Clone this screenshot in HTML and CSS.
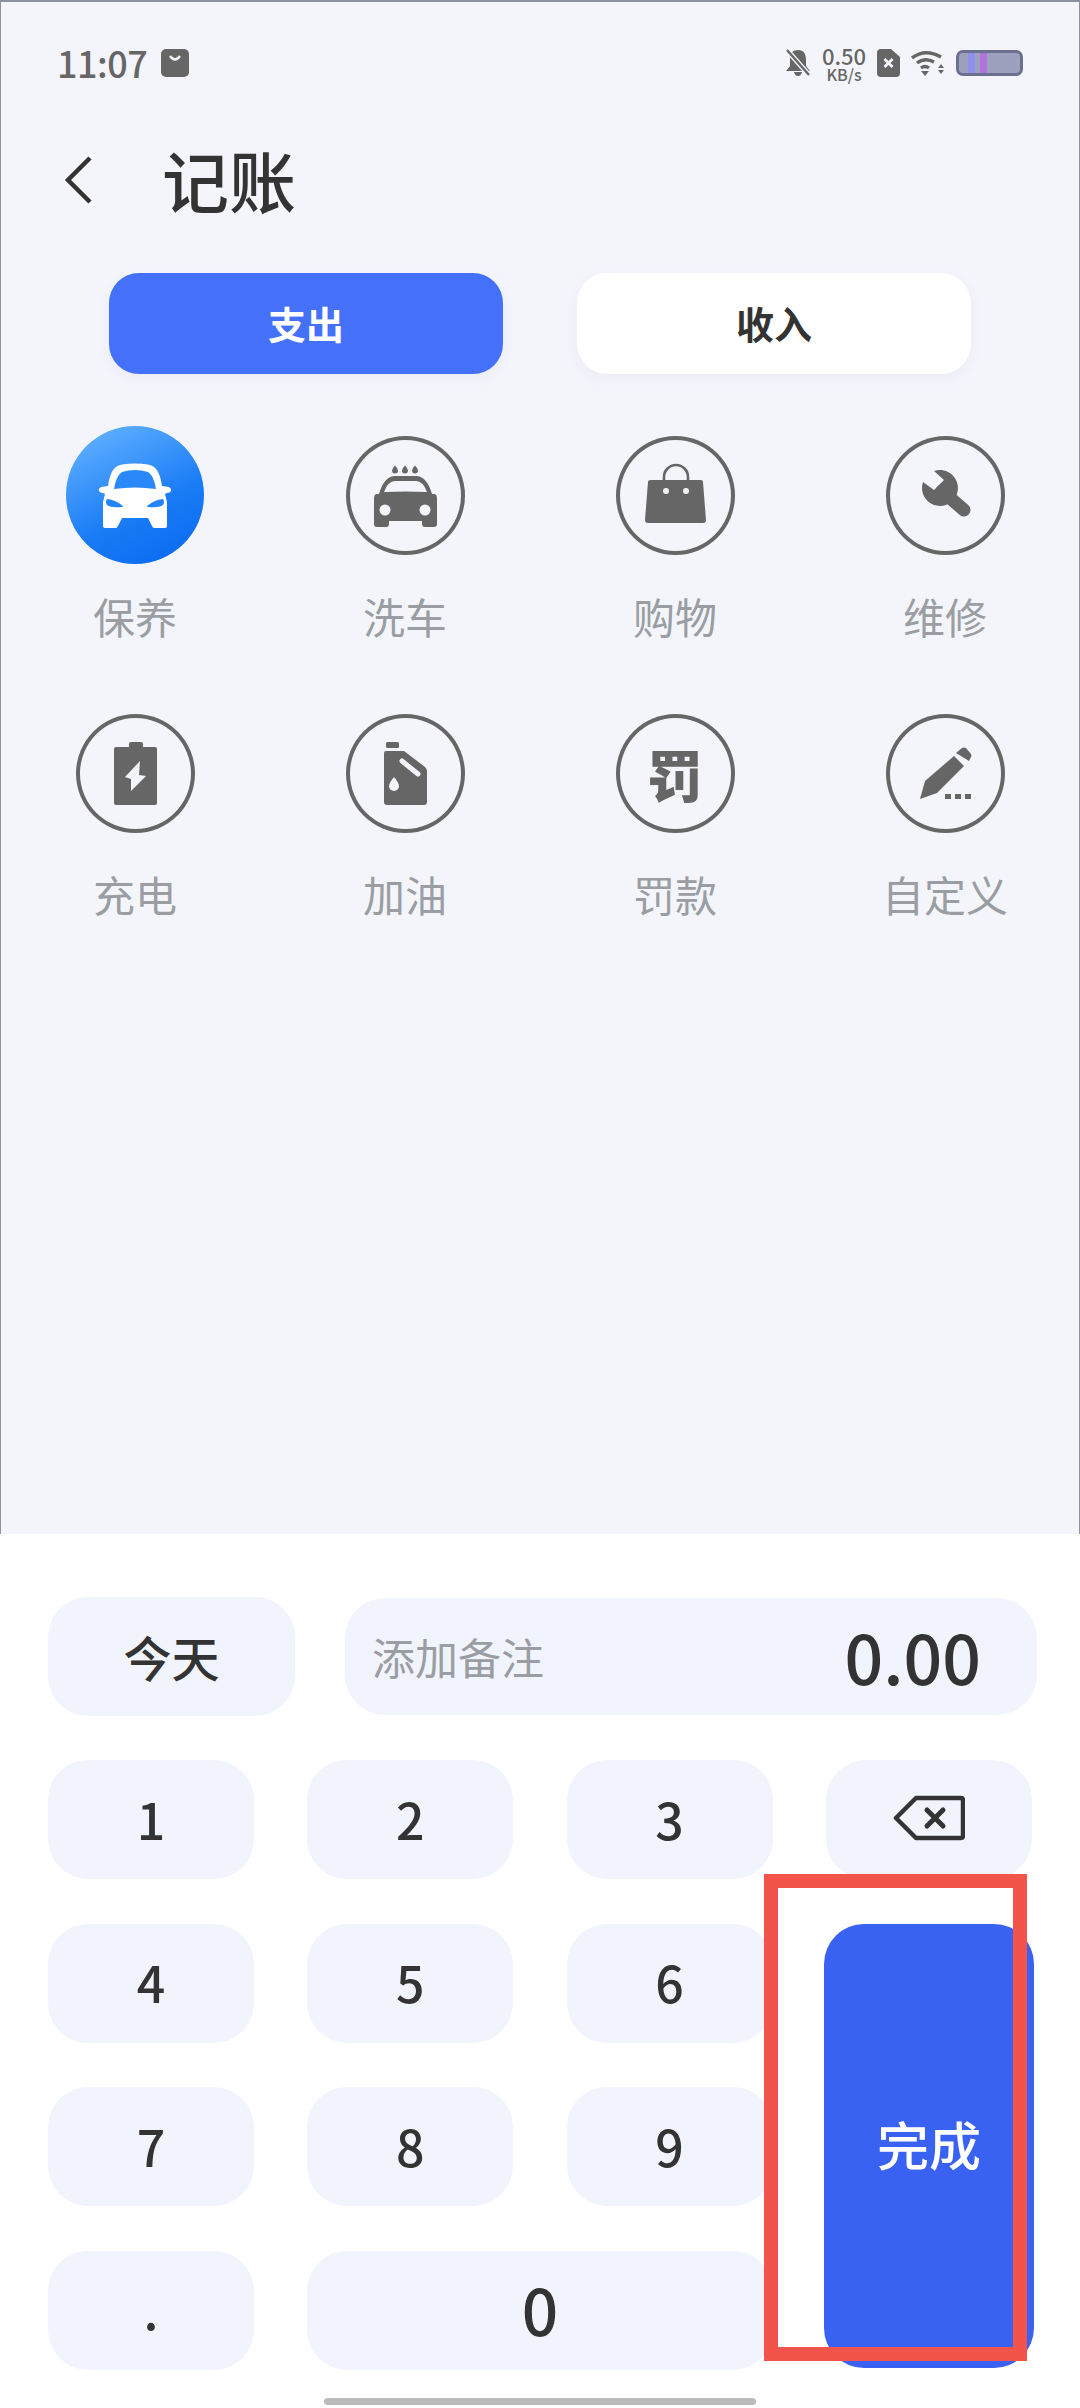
FILE: index.html
```html
<!DOCTYPE html>
<html lang="zh-CN">
<head>
  <meta charset="UTF-8" />
  <meta name="viewport" content="width=device-width, initial-scale=1.0"/>
  <title>记账</title>
  <link rel="stylesheet" href="styles.css">
</head>
<body>

<div class="screen">
  <div class="top">
    <div class="statusbar">
      <div class="status-left">
        <span class="time">11:07</span>
        <svg class="st-bag" width="28" height="28" viewBox="0 0 28 28">
          <rect width="28" height="28" rx="5" fill="#666"/>
          <path d="M9 7q5 7 10 0" fill="none" stroke="#f4f5fb" stroke-width="2.4"/>
        </svg>
      </div>
      <div class="status-right">
        <svg width="26" height="28" viewBox="0 0 26 28">
          <path d="M13 1c6 0 8 4 8 10v6l4 5H1l4-5v-6C5 5 7 1 13 1zM9 23h8q-1 4-4 4t-4-4z" fill="#666"/>
          <path d="M2 1l22 25" stroke="#f4f5fb" stroke-width="5"/>
          <path d="M2 1l22 25" stroke="#666" stroke-width="2.4"/>
        </svg>
        <div class="speed"><span class="speed-num">0.50</span><span class="speed-unit">KB/s</span></div>
        <svg width="23" height="28" viewBox="0 0 23 28">
          <path d="M4 0h10l9 8v16a4 4 0 0 1-4 4H4a4 4 0 0 1-4-4V4a4 4 0 0 1 4-4z" fill="#666"/>
          <path d="M7.5 10l8 8M15.500 10l-8 8" stroke="#f4f5fb" stroke-width="2.8"/>
        </svg>
        <svg width="34" height="26" viewBox="0 0 34 26">
          <g fill="none" stroke="#666" stroke-width="3.4">
            <path d="M1 8q13-10 29-1"/>
            <path d="M6 13q8-6 17-1"/>
            <path d="M10 18q4-3 8 0"/>
          </g>
          <path d="M10 21h8l-4 5z" fill="#666"/>
          <path d="M30 14l3 4h-6zM27 20h6l-3 4z" fill="#666"/>
        </svg>
        <div class="battery"><span class="batt-a"></span><span class="batt-b"></span></div>
      </div>
    </div>

    <div class="header">
      <svg class="back" width="28" height="50" viewBox="0 0 28 50">
        <path d="M26 3L4 25l22 22" fill="none" stroke="#333" stroke-width="4.500"/>
      </svg>
      <h1 class="title">记账</h1>
    </div>

    <div class="tabs">
      <div class="tab active">支出</div>
      <div class="tab">收入</div>
    </div>

    <div class="cats">
      <div class="cat">
        <div class="cat-icon">
          <svg class="car-on" width="138" height="138" viewBox="0 0 138 138">
            <defs>
              <linearGradient id="blue" x1="0.25" y1="0" x2="0.75" y2="1">
                <stop offset="0" stop-color="#5fb0ff"/>
                <stop offset="0.6" stop-color="#1b7cf6"/>
                <stop offset="1" stop-color="#0b6cf2"/>
              </linearGradient>
            </defs>
            <circle cx="69" cy="69" r="69" fill="url(#blue)"/>
            <path d="M42 60C44 46 48 40 56 38.500q13-2 26 0C90 40 94 46 96 60l7 1q3 2 2 4t-4 2l-2 1 2 8v24q0 2-2 2H88q-1 0-2-2l-4-8H56l-4 8q-1 2-2 2H39q-2 0-2-2V76l2-8-2-1q-3 0-4-2t2-4z" fill="#fff"/>
            <path d="M48 63q2-13 8-17 13-4 26 0 6 4 8 17-21-3-42 0z" fill="#2a88f8"/>
            <path d="M41 73q9 1 16 7 0 1-1 1-11 1-15-2-2-3 0-6zM97 73q-9 1-16 7 0 1 1 1 11 1 15-2 2-3 0-6z" fill="#2484f8"/>
          </svg>
        </div>
        <div class="cat-name">保养</div>
      </div>
      <div class="cat">
        <div class="cat-icon">
          <div class="ring">
            <svg width="119" height="119" viewBox="0 0 119 119">
              <path d="M49 29.500q3 3 3 5a3 3 0 0 1-6 0q0-2 3-5zM59 29.500q3 3 3 5a3 3 0 0 1-6 0q0-2 3-5zM69 29.500q3 3 3 5a3 3 0 0 1-6 0q0-2 3-5z" fill="#666"/>
              <path d="M33 58q5-17 15-18h23q10 1 15 18l3 0q2 1 2 4v26q0 3-3 3H79q-3 0-3-3v-3H43v3q0 3-3 3H31q-3 0-3-3V62q0-3 2-4z" fill="#666"/>
              <path d="M38 56q4-11 11-11h21q7 0 11 11q-21-1-43 0z" fill="#f4f5fb"/>
              <circle cx="39" cy="74" r="5.500" fill="#f4f5fb"/>
              <circle cx="79" cy="74" r="5.500" fill="#f4f5fb"/>
            </svg>
          </div>
        </div>
        <div class="cat-name">洗车</div>
      </div>
      <div class="cat">
        <div class="cat-icon">
          <div class="ring">
            <svg width="119" height="119" viewBox="0 0 119 119">
              <path d="M48 45V41a12 12 0 0 1 24 0v4" fill="none" stroke="#666" stroke-width="2.600"/>
              <path d="M35 44h50q2 0 2 2l3 38q0 3-3 3H32q-3 0-3-3l3-38q0-2 3-2z" fill="#666"/>
              <circle cx="50" cy="55" r="3" fill="#f4f5fb"/>
              <circle cx="70" cy="55" r="3" fill="#f4f5fb"/>
            </svg>
          </div>
        </div>
        <div class="cat-name">购物</div>
      </div>
      <div class="cat">
        <div class="cat-icon">
          <div class="ring">
            <svg width="119" height="119" viewBox="0 0 119 119">
              <path d="M48 35L58 44 48 54 37 46A18 18 0 1 0 48 35z" fill="#666"/>
              <path d="M56 55L78 74" stroke="#666" stroke-width="13" stroke-linecap="round"/>
            </svg>
          </div>
        </div>
        <div class="cat-name">维修</div>
      </div>
      <div class="cat">
        <div class="cat-icon">
          <div class="ring">
            <svg width="119" height="119" viewBox="0 0 119 119">
              <path d="M53 30q0-2 2-2h10q2 0 2 2v3H53z" fill="#666"/>
              <rect x="38" y="33" width="43" height="58" rx="2" fill="#666"/>
              <path d="M64 47L49 63l6 2v12l15-15-7-1z" fill="#f4f5fb"/>
            </svg>
          </div>
        </div>
        <div class="cat-name">充电</div>
      </div>
      <div class="cat">
        <div class="cat-icon">
          <div class="ring">
            <svg width="119" height="119" viewBox="0 0 119 119">
              <rect x="40" y="28" width="13" height="6" rx="1.500" fill="#666"/>
              <path d="M40 37h18l21 16q2 2 2 4v31q0 3-3 3H41q-3 0-3-3V39q0-2 2-2z" fill="#666"/>
              <path d="M56 47l16 13" stroke="#f4f5fb" stroke-width="5" stroke-linecap="round"/>
              <path d="M48 63q5 6 5 9a5 5 0 0 1-10 0q0-3 5-9z" fill="#f4f5fb"/>
            </svg>
          </div>
        </div>
        <div class="cat-name">加油</div>
      </div>
      <div class="cat">
        <div class="cat-icon">
          <div class="ring"><span class="ring-char">罚</span></div>
        </div>
        <div class="cat-name">罚款</div>
      </div>
      <div class="cat">
        <div class="cat-icon">
          <div class="ring">
            <svg width="119" height="119" viewBox="0 0 119 119">
              <path d="M34 85l5-18 29-25 10 10-27 27z" fill="#666"/>
              <path d="M70 39l6-5q2-1 4 0l5 6q1 2 0 3l-2 4z" fill="#666"/>
              <path d="M59 80h6v5h-6zM69 80h6v5h-6zM79 80h6v5h-6z" fill="#666"/>
            </svg>
          </div>
        </div>
        <div class="cat-name">自定义</div>
      </div>
    </div>
  </div>

  <div class="panel">
    <div class="entry">
      <div class="date-btn">今天</div>
      <div class="note">
        <span class="note-hint">添加备注</span>
        <span class="amount">0.00</span>
      </div>
    </div>

    <div class="keypad">
      <div class="key">1</div>
      <div class="key">2</div>
      <div class="key">3</div>
      <div class="key">
        <svg width="72" height="46" viewBox="0 0 72 46">
          <path d="M23 3h45q2 0 2 2v36q0 2-2 2H23L3 23z" fill="none" stroke="#333" stroke-width="4.500" stroke-linejoin="round"/>
          <path d="M34 15l16 16M50 15L34 31" stroke="#333" stroke-width="5" stroke-linecap="round"/>
        </svg>
      </div>
      <div class="key">4</div>
      <div class="key">5</div>
      <div class="key">6</div>
      <div class="key done">完成</div>
      <div class="key">7</div>
      <div class="key">8</div>
      <div class="key">9</div>
      <div class="key">.</div>
      <div class="key zero">0</div>
    </div>

    <div class="home-bar"></div>
    <div class="mark"></div>
  </div>
</div>

</body>
</html>
```

FILE: styles.css
```css
* {
  box-sizing: border-box;
}

body {
  margin: 0;
  font-family: "Noto Sans CJK SC", "Noto Sans", sans-serif;
  background: #fff;
  color: #333;
}

.screen {
  width: 1080px;
  height: 2408px;
  display: flex;
  flex-direction: column;
  overflow: hidden;
}

.top {
  height: 1534px;
  background: #f4f5fb;
  border-top: 2px solid #8d91a0;
  border-left: 1px solid #8d91a0;
  border-right: 1px solid #8d91a0;
}

/* status bar */
.statusbar {
  height: 122px;
  padding: 0 56px;
  display: flex;
  justify-content: space-between;
  align-items: center;
  color: #666;
}

.status-left {
  display: flex;
  align-items: center;
  gap: 14px;
}

.time {
  font-size: 36px;
  line-height: 40px;
  font-weight: 500;
  letter-spacing: -0.5px;
  padding-bottom: 3px;
}

.status-right {
  display: flex;
  align-items: center;
  gap: 11px;
}

.speed {
  display: flex;
  flex-direction: column;
  align-items: center;
  width: 44px;
  font-weight: 500;
}

.speed-num {
  font-size: 22px;
  line-height: 21px;
}

.speed-unit {
  font-size: 16px;
  line-height: 16px;
}

.battery {
  position: relative;
  width: 67px;
  height: 26px;
  border: 3px solid #6b7090;
  border-radius: 7px;
  background: #9da1bd;
}

.batt-a,
.batt-b {
  position: absolute;
  top: 0;
  bottom: 0;
  width: 7px;
}

.batt-a {
  left: 9px;
  background: #8f90ee;
}

.batt-b {
  left: 21px;
  background: #b173dc;
}

/* title row */
.header {
  height: 112px;
  padding-left: 63px;
  display: flex;
  align-items: center;
  gap: 70px;
}

.title {
  margin: 0 0 3px;
  font-size: 67px;
  line-height: 80px;
  font-weight: 500;
}

.tabs {
  margin-top: 37px;
  padding: 0 108px;
  display: flex;
  gap: 74px;
}

.tab {
  width: 394px;
  height: 101px;
  padding-bottom: 3px;
  border-radius: 30px;
  background: #fff;
  box-shadow: 0 4px 14px rgba(90, 100, 160, 0.06);
  display: flex;
  align-items: center;
  justify-content: center;
  font-size: 38px;
  font-weight: 700;
}

.tab.active {
  background: #4470fa;
  color: #fff;
}

/* category grid */
.cats {
  margin: 52px -1px 0;
  display: grid;
  grid-template-columns: repeat(4, 270px);
  row-gap: 58px;
}

.cat {
  display: flex;
  flex-direction: column;
  align-items: center;
}

.cat-icon {
  width: 138px;
  height: 138px;
  display: flex;
  align-items: center;
  justify-content: center;
}

.cat-icon svg {
  display: block;
}

.ring {
  width: 119px;
  height: 119px;
  border-radius: 50%;
  box-shadow: inset 0 0 0 4px #666;
  display: flex;
  align-items: center;
  justify-content: center;
}

.ring-char {
  font-size: 56px;
  line-height: 60px;
  font-weight: 900;
  color: #666;
}

.cat-name {
  margin-top: 22px;
  font-size: 42px;
  line-height: 60px;
  color: #9a9ea3;
}

/* bottom input panel */
.panel {
  position: relative;
  flex: 1;
  background: #fff;
  padding: 63px 43px 0 48px;
  display: flex;
  flex-direction: column;
}

.entry {
  display: flex;
  align-items: center;
  gap: 50px;
}

.date-btn {
  width: 247px;
  height: 119px;
  padding-bottom: 2px;
  border-radius: 40px;
  background: #f1f4fd;
  display: flex;
  align-items: center;
  justify-content: center;
  font-size: 48px;
  font-weight: 500;
}

.note {
  width: 692px;
  height: 117px;
  padding: 0 56px 2px 27px;
  border-radius: 40px;
  background: #f1f4fd;
  display: flex;
  align-items: center;
  justify-content: space-between;
}

.note-hint {
  font-size: 43px;
  color: #9a9ea3;
}

.amount {
  font-size: 68px;
  line-height: 80px;
  font-weight: 500;
}

.keypad {
  margin-top: 44px;
  display: grid;
  grid-template-columns: repeat(4, 206px);
  grid-auto-rows: 119px;
  column-gap: 53.3px;
  row-gap: 44.6px;
}

.key {
  padding-bottom: 4px;
  border-radius: 40px;
  background: #f1f4fd;
  display: flex;
  align-items: center;
  justify-content: center;
  font-size: 50px;
  font-weight: 500;
}

.zero {
  grid-column: 2 / span 2;
  font-size: 64px;
}

.done {
  grid-column: 4;
  grid-row: 2 / span 3;
  margin: 0 -2px 2px;
  background: #3a62f2;
  color: #fff;
  font-size: 52px;
}

.home-bar {
  width: 432px;
  height: 7px;
  margin: 28px 0 0 276px;
  border-radius: 4px;
  background: #bbb;
}

/* red outline drawn over the keypad */
.mark {
  position: absolute;
  top: 340px;
  left: 764px;
  width: 263px;
  height: 487px;
  border: 14px solid #f2544c;
}
```
